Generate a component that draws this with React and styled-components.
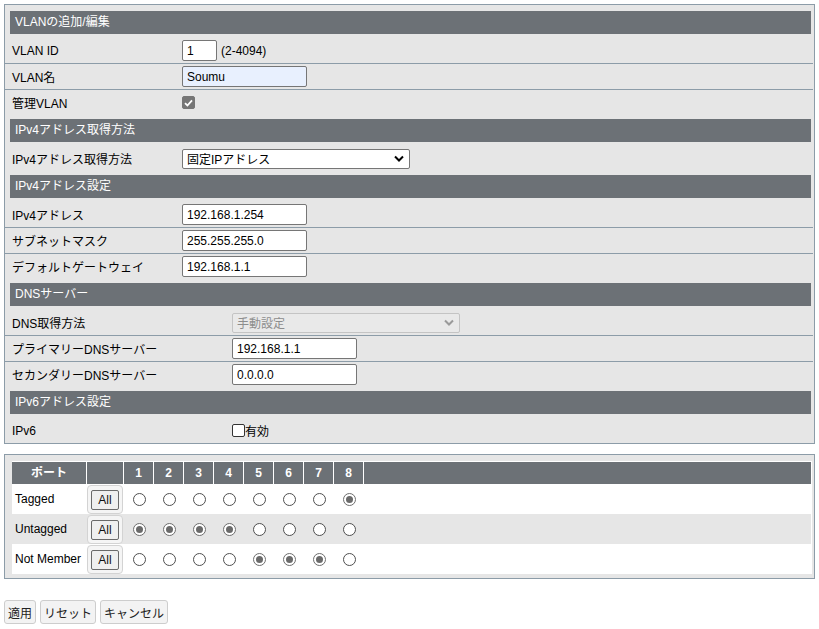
import styled, { createGlobalStyle } from "styled-components";

const GlobalStyle = createGlobalStyle`
  body {
    margin: 4px;
    background: #fff;
    font-family: "Liberation Sans", "Noto Sans CJK JP", sans-serif;
    font-size: 12px;
    color: #000;
  }
`;

const Panel = styled.div`
  border: 1px solid #8c9ca8;
  background: #e6e6e6;
  padding: ${(p) => p.$pad};
  margin-bottom: ${(p) => p.$gap || 0}px;
`;

const SectionHead = styled.div`
  height: 23px;
  line-height: 23px;
  margin: 0 3px 0 5px;
  padding-left: 5px;
  background: #6c7176;
  color: #fff;
`;

const SectionBody = styled.div`
  padding: 4px 1px ${(p) => (p.$last ? 0 : 4)}px 0;
`;

const Row = styled.div`
  display: grid;
  grid-template-columns: ${(p) => p.$labelW}px 1fr;
  align-items: center;
  height: 25px;
  padding-left: 7px;
  & + & {
    border-top: 1px solid #8c9ca8;
  }
`;

const Label = styled.div`
  white-space: nowrap;
`;

const Value = styled.div`
  display: flex;
  align-items: center;
  gap: 4px;
`;

const TextInput = styled.input`
  box-sizing: border-box;
  width: ${(p) => p.$w || 125}px;
  height: 21px;
  padding: 0 4px;
  border: 1px solid #767676;
  border-radius: 2px;
  font: 12px "Liberation Sans", "Noto Sans CJK JP", sans-serif;
  color: #000;
  background: ${(p) => (p.$filled ? "#e8f0fe" : "#fff")};
`;

const SelectBox = styled.div`
  box-sizing: border-box;
  width: 228px;
  height: 20px;
  display: flex;
  align-items: center;
  justify-content: space-between;
  padding: 0 5px 0 4px;
  border: 1px solid ${(p) => (p.$disabled ? "#c4c4c4" : "#767676")};
  border-radius: 2px;
  background: ${(p) => (p.$disabled ? "#e9e9e9" : "#fff")};
  color: ${(p) => (p.$disabled ? "#8d8d8d" : "#000")};
`;

const CheckBox = styled.span`
  box-sizing: border-box;
  display: inline-flex;
  align-items: center;
  justify-content: center;
  width: 13px;
  height: 13px;
  border-radius: 2px;
  border: 1px solid ${(p) => (p.$checked ? "#767676" : "#333")};
  background: ${(p) => (p.$checked ? "#767676" : "#fff")};
`;

const CheckLabel = styled.span`
  display: flex;
  align-items: center;
`;

const PortPanelInner = styled.div`
  border-top: 1px solid #fff;
  border-right: 1px solid #fff;
`;

const GridRow = styled.div`
  display: grid;
  grid-template-columns: 75px 37px repeat(8, 30px) 1fr;
  height: ${(p) => (p.$head ? 22 : 30)}px;
  background: ${(p) => (p.$shade ? "#e6e6e6" : "#fff")};
  align-items: center;
`;

const HeadCell = styled.div`
  height: 22px;
  line-height: 22px;
  background: #6c7176;
  color: #fff;
  font-weight: bold;
  text-align: center;
  border-right: 1px solid #fff;
  &:last-child {
    border-right: none;
  }
`;

const RowLabel = styled.div`
  padding-left: 3px;
  white-space: nowrap;
`;

const AllFrame = styled.div`
  box-sizing: border-box;
  width: 36px;
  height: 29px;
  margin-top: 1px;
  display: flex;
  align-items: center;
  justify-content: center;
  border: 1px solid #d3d3d3;
  border-radius: 4px;
  background: #f5f5f5;
`;

const AllButton = styled.button`
  box-sizing: border-box;
  width: 28px;
  height: 20px;
  padding: 0;
  border: 1px solid #6a6a6a;
  border-radius: 2px;
  background: #efefef;
  font: 12px "Liberation Sans", sans-serif;
  color: #111;
`;

const RadioCell = styled.div`
  display: flex;
  justify-content: center;
`;

const Radio = styled.span`
  box-sizing: border-box;
  display: flex;
  align-items: center;
  justify-content: center;
  width: 13px;
  height: 13px;
  border-radius: 50%;
  background: #fff;
  border: 1px solid ${(p) => (p.$on ? "#6e6e6e" : "#4f4f4f")};
  &::after {
    content: "";
    display: ${(p) => (p.$on ? "block" : "none")};
    width: 7px;
    height: 7px;
    border-radius: 50%;
    background: #6a6a6a;
  }
`;

const ButtonBar = styled.div`
  display: flex;
  gap: 4px;
  margin-top: 21px;
`;

const ActionButton = styled.button`
  height: 24px;
  padding: 0 3px;
  border: 1px solid #cdcdcd;
  border-radius: 3px;
  background: #f3f3f3;
  color: #222;
  font: 12px "Liberation Sans", "Noto Sans CJK JP", sans-serif;
`;

const Chevron = ({ color = "#000" }) => (
  <svg width="10" height="7" viewBox="0 0 10 7">
    <polyline points="1,1.5 5,5.5 9,1.5" fill="none" stroke={color} strokeWidth="2" />
  </svg>
);

const Tick = () => (
  <svg width="9" height="8" viewBox="0 0 9 8">
    <polyline points="1,4.2 3.4,6.5 8,1.3" fill="none" stroke="#fff" strokeWidth="1.8" />
  </svg>
);

const ports = [1, 2, 3, 4, 5, 6, 7, 8];
const membership = [
  { name: "Tagged", on: [8] },
  { name: "Untagged", on: [1, 2, 3, 4], shade: true },
  { name: "Not Member", on: [5, 6, 7] },
];

const App = () => {
  return (
    <>
      <GlobalStyle />
      <Panel $pad="6px 0 0 0" $gap={10}>
        <SectionHead>VLANの追加/編集</SectionHead>
        <SectionBody>
          <Row $labelW={170}>
            <Label>VLAN ID</Label>
            <Value>
              <TextInput $w={35} defaultValue="1" />
              <span>(2-4094)</span>
            </Value>
          </Row>
          <Row $labelW={170}>
            <Label>VLAN名</Label>
            <Value>
              <TextInput $filled defaultValue="Soumu" />
            </Value>
          </Row>
          <Row $labelW={170}>
            <Label>管理VLAN</Label>
            <Value>
              <CheckBox $checked>
                <Tick />
              </CheckBox>
            </Value>
          </Row>
        </SectionBody>

        <SectionHead>IPv4アドレス取得方法</SectionHead>
        <SectionBody>
          <Row $labelW={170}>
            <Label>IPv4アドレス取得方法</Label>
            <Value>
              <SelectBox>
                <span>固定IPアドレス</span>
                <Chevron />
              </SelectBox>
            </Value>
          </Row>
        </SectionBody>

        <SectionHead>IPv4アドレス設定</SectionHead>
        <SectionBody>
          <Row $labelW={170}>
            <Label>IPv4アドレス</Label>
            <Value>
              <TextInput defaultValue="192.168.1.254" />
            </Value>
          </Row>
          <Row $labelW={170}>
            <Label>サブネットマスク</Label>
            <Value>
              <TextInput defaultValue="255.255.255.0" />
            </Value>
          </Row>
          <Row $labelW={170}>
            <Label>デフォルトゲートウェイ</Label>
            <Value>
              <TextInput defaultValue="192.168.1.1" />
            </Value>
          </Row>
        </SectionBody>

        <SectionHead>DNSサーバー</SectionHead>
        <SectionBody>
          <Row $labelW={220}>
            <Label>DNS取得方法</Label>
            <Value>
              <SelectBox $disabled>
                <span>手動設定</span>
                <Chevron color="#9a9a9a" />
              </SelectBox>
            </Value>
          </Row>
          <Row $labelW={220}>
            <Label>プライマリーDNSサーバー</Label>
            <Value>
              <TextInput defaultValue="192.168.1.1" />
            </Value>
          </Row>
          <Row $labelW={220}>
            <Label>セカンダリーDNSサーバー</Label>
            <Value>
              <TextInput defaultValue="0.0.0.0" />
            </Value>
          </Row>
        </SectionBody>

        <SectionHead>IPv6アドレス設定</SectionHead>
        <SectionBody $last>
          <Row $labelW={220}>
            <Label>IPv6</Label>
            <Value>
              <CheckLabel>
                <CheckBox />
                有効
              </CheckLabel>
            </Value>
          </Row>
        </SectionBody>
      </Panel>

      <Panel $pad="6px 2px 4px 7px">
        <PortPanelInner>
          <GridRow $head>
            <HeadCell>ポート</HeadCell>
            <HeadCell />
            {ports.map((n) => (
              <HeadCell key={n}>{n}</HeadCell>
            ))}
            <HeadCell />
          </GridRow>
          {membership.map((m) => (
            <GridRow key={m.name} $shade={m.shade}>
              <RowLabel>{m.name}</RowLabel>
              <AllFrame>
                <AllButton>All</AllButton>
              </AllFrame>
              {ports.map((n) => (
                <RadioCell key={n}>
                  <Radio $on={m.on.includes(n)} />
                </RadioCell>
              ))}
              <div />
            </GridRow>
          ))}
        </PortPanelInner>
      </Panel>

      <ButtonBar>
        <ActionButton>適用</ActionButton>
        <ActionButton>リセット</ActionButton>
        <ActionButton>キャンセル</ActionButton>
      </ButtonBar>
    </>
  );
};

export default App;
